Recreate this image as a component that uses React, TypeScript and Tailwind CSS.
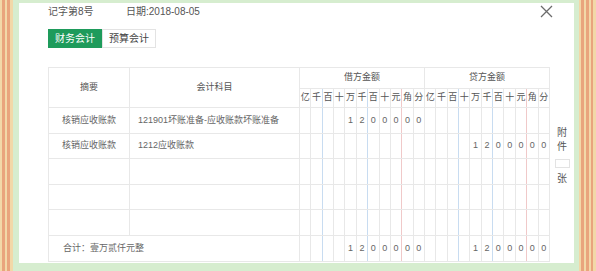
const digitLabels = ["亿", "千", "百", "十", "万", "千", "百", "十", "元", "角", "分"];

// right-border colour of each digit column (blue = thousands, red = yuan/jiao)
const debitLines = [
  "",
  "border-r-[#c8dcf1]",
  "",
  "",
  "",
  "border-r-[#c8dcf1]",
  "",
  "",
  "border-r-[#f0c9c9]",
  "",
  "",
];
const creditLines = [
  "",
  "",
  "border-r-[#c8dcf1]",
  "",
  "",
  "border-r-[#c8dcf1]",
  "",
  "",
  "border-r-[#f0c9c9]",
  "",
  "",
];

const rows = [
  { summary: "核销应收账款", account: "121901坏账准备-应收账款坏账准备", debit: "1200000", credit: "", h: "h-[26px]" },
  { summary: "核销应收账款", account: "1212应收账款", debit: "", credit: "1200000", h: "h-[25px]" },
  { summary: "", account: "", debit: "", credit: "", h: "h-[26px]" },
  { summary: "", account: "", debit: "", credit: "", h: "h-[25px]" },
  { summary: "", account: "", debit: "", credit: "", h: "h-[26px]" },
];

function spread(amount: string) {
  const cells = Array(11).fill("");
  const chars = amount.split("");
  chars.forEach((c, i) => {
    cells[11 - chars.length + i] = c;
  });
  return cells;
}

function AmountCells({ debit, credit }: { debit: string; credit: string }) {
  return (
    <>
      {spread(debit).map((d, i) => (
        <td key={"d" + i} className={`border border-[#e8e8e8] p-0 text-center ${debitLines[i]}`}>
          {d}
        </td>
      ))}
      {spread(credit).map((d, i) => (
        <td key={"c" + i} className={`border border-[#e8e8e8] p-0 text-center ${creditLines[i]}`}>
          {d}
        </td>
      ))}
    </>
  );
}

function Stripes({ parts }: { parts: string[] }) {
  return (
    <div className="flex h-full">
      {parts.map((p, i) => (
        <div key={i} className={`h-full ${p}`} />
      ))}
    </div>
  );
}

export default function App() {
  return (
    <div className="flex w-[596px] h-[271px] overflow-hidden bg-[#d6edcf] font-[family-name:Liberation_Sans,Noto_Sans_CJK_SC,sans-serif]">
      <Stripes
        parts={[
          "w-[2px] bg-[#f2d8a8]",
          "w-[3px] bg-[#e9a47d]",
          "w-[2px] bg-[#f2d8a8]",
          "w-[3px] bg-[#e9a47d]",
          "w-[3px] bg-[#f2d8a8]",
        ]}
      />

      <div className="ml-[6px] mt-[3px] flex h-[260px] w-[555px] flex-col bg-white pl-[29px]">
        <div className="mt-[1px] flex h-[14px] items-center text-[10px] text-[#555]">
          <span className="w-[78px]">记字第8号</span>
          <span>日期:2018-08-05</span>
          <svg className="ml-auto mr-[21px]" width="13" height="13" viewBox="0 0 13 13">
            <path d="M1 1 L12 12 M12 1 L1 12" stroke="#6b6b6b" strokeWidth="1.3" />
          </svg>
        </div>

        <div className="mt-[11px] flex h-[19px] text-[10px]">
          <div className="flex w-[54px] items-center justify-center bg-[#1e9b5b] text-white">财务会计</div>
          <div className="flex w-[54px] items-center justify-center border border-[#e3e3e3] text-[#444]">预算会计</div>
        </div>

        <div className="mt-[19px] flex">
          <table className="w-[502px] table-fixed border-collapse border border-[#e3e3e3] text-[9px] text-[#666]">
            <colgroup>
              <col className="w-[81px]" />
              <col className="w-[170px]" />
              {Array.from({ length: 22 }).map((_, i) => (
                <col key={i} />
              ))}
            </colgroup>
            <thead>
              <tr className="h-[21px]">
                <th rowSpan={2} className="border border-[#e8e8e8] font-normal text-[#555]">摘要</th>
                <th rowSpan={2} className="border border-[#e8e8e8] font-normal text-[#555]">会计科目</th>
                <th colSpan={11} className="border border-[#e8e8e8] font-normal text-[#555]">借方金额</th>
                <th colSpan={11} className="border border-[#e8e8e8] font-normal text-[#555]">贷方金额</th>
              </tr>
              <tr className="h-[19px]">
                {digitLabels.map((l, i) => (
                  <th key={"dl" + i} className={`border border-[#e8e8e8] p-0 font-normal text-[#555] ${debitLines[i]}`}>
                    {l}
                  </th>
                ))}
                {digitLabels.map((l, i) => (
                  <th key={"cl" + i} className={`border border-[#e8e8e8] p-0 font-normal text-[#555] ${creditLines[i]}`}>
                    {l}
                  </th>
                ))}
              </tr>
            </thead>
            <tbody>
              {rows.map((r, i) => (
                <tr key={i} className={r.h}>
                  <td className="border border-[#e8e8e8] text-center">{r.summary}</td>
                  <td className="border border-[#e8e8e8] pl-[8px]">{r.account}</td>
                  <AmountCells debit={r.debit} credit={r.credit} />
                </tr>
              ))}
              <tr className="h-[26px]">
                <td colSpan={2} className="border border-[#e8e8e8] pl-[14px]">合计：壹万贰仟元整</td>
                <AmountCells debit="1200000" credit="1200000" />
              </tr>
            </tbody>
          </table>

          <div className="flex w-[24px] flex-col items-center pt-[59px] text-[10px] text-[#555]">
            <span className="leading-[14px]">附</span>
            <span className="leading-[14px]">件</span>
            <div className="mt-[5px] h-[9px] w-[15px] border border-[#e3e3e3]" />
            <span className="mt-[4px] leading-[14px]">张</span>
          </div>
        </div>
      </div>

      <div className="ml-[5px]">
        <Stripes
          parts={[
            "w-[2px] bg-[#f2d8a8]",
            "w-[3px] bg-[#e9a47d]",
            "w-[2px] bg-[#f2d8a8]",
            "w-[3px] bg-[#e9a47d]",
            "w-[2px] bg-[#f2d8a8]",
            "w-[2px] bg-[#e9a47d]",
            "w-[3px] bg-[#f2d8a8]",
          ]}
        />
      </div>
    </div>
  );
}
